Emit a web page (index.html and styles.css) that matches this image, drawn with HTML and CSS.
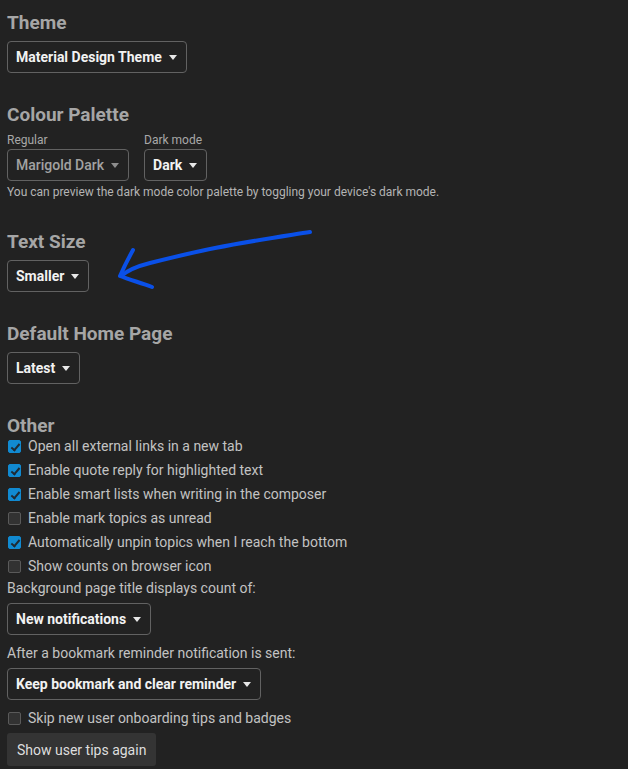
FILE: index.html
```html
<!DOCTYPE html>
<html>
<head>
<meta charset="utf-8">
<link rel="stylesheet" href="styles.css">
</head>
<body>
<div class="page">
  <section class="group">
    <h2 class="heading">Theme</h2>
    <div class="select"><span>Material Design Theme</span><i class="caret"></i></div>
  </section>

  <section class="group">
    <h2 class="heading palette-heading">Colour Palette</h2>
    <div class="palette">
      <div class="palette-col">
        <div class="sublabel">Regular</div>
        <div class="select disabled"><span>Marigold Dark</span><i class="caret"></i></div>
      </div>
      <div class="palette-col">
        <div class="sublabel">Dark mode</div>
        <div class="select"><span>Dark</span><i class="caret"></i></div>
      </div>
    </div>
    <div class="desc">You can preview the dark mode color palette by toggling your device's dark mode.</div>
  </section>

  <section class="group">
    <h2 class="heading">Text Size</h2>
    <div class="select"><span>Smaller</span><i class="caret"></i></div>
  </section>

  <section class="group">
    <h2 class="heading">Default Home Page</h2>
    <div class="select"><span>Latest</span><i class="caret"></i></div>
  </section>

  <section class="group other">
    <h2 class="heading tight">Other</h2>
    <label class="check"><span class="box on"></span>Open all external links in a new tab</label>
    <label class="check"><span class="box on"></span>Enable quote reply for highlighted text</label>
    <label class="check"><span class="box on"></span>Enable smart lists when writing in the composer</label>
    <label class="check"><span class="box"></span>Enable mark topics as unread</label>
    <label class="check"><span class="box on"></span>Automatically unpin topics when I reach the bottom</label>
    <label class="check"><span class="box"></span>Show counts on browser icon</label>
    <div class="field-label first">Background page title displays count of:</div>
    <div class="select"><span>New notifications</span><i class="caret"></i></div>
    <div class="field-label">After a bookmark reminder notification is sent:</div>
    <div class="select"><span>Keep bookmark and clear reminder</span><i class="caret"></i></div>
    <label class="check skip"><span class="box"></span>Skip new user onboarding tips and badges</label>
    <button class="btn">Show user tips again</button>
  </section>
</div>

<svg class="annotation" width="628" height="769" viewBox="0 0 628 769" xmlns="http://www.w3.org/2000/svg">
  <path d="M310 232 C 285 236, 250 241, 215 248 C 190 253, 170 258, 150 263 C 138 266, 128 270, 121 276" fill="none" stroke="#0a50e8" stroke-width="4" stroke-linecap="round" stroke-linejoin="round"/>
  <path d="M133 250 C 128 259, 124 267, 120 276 C 130 280, 142 283, 152 287" fill="none" stroke="#0a50e8" stroke-width="4" stroke-linecap="round" stroke-linejoin="round"/>
</svg>
</body>
</html>
```

FILE: styles.css
```css
html, body {
  margin: 0;
  padding: 0;
  background: #222222;
}

body {
  font-family: Roboto, "Liberation Sans", sans-serif;
  color: #c3c3c3;
  font-size: 14px;
  position: relative;
  min-height: 769px;
}

.page {
  padding: 13px 7px 0 7px;
}

.group {
  margin-bottom: 32px;
}

.heading {
  margin: 0 0 9px 0;
  font-size: 19px;
  line-height: 19px;
  font-weight: 700;
  color: #a6a6a6;
}

.heading.palette-heading {
  margin-bottom: 8px;
}

.heading.tight {
  margin-bottom: 2px;
}

.select {
  display: inline-flex;
  align-items: center;
  box-sizing: border-box;
  height: 32px;
  padding: 0 9px 0 8px;
  border: 1px solid #626262;
  border-radius: 4px;
  color: #f2f2f2;
  font-weight: 700;
  font-size: 14px;
  gap: 7px;
}

.select.disabled {
  color: #a2a2a2;
  font-weight: 500;
}

.caret {
  display: block;
  width: 0;
  height: 0;
  border-left: 4.5px solid transparent;
  border-right: 4.5px solid transparent;
  border-top: 5px solid #e8e8e8;
  margin-top: 1px;
}

.select.disabled .caret {
  border-top-color: #8e8e8e;
}

.palette {
  display: flex;
  gap: 15px;
}

.palette-col {
  display: flex;
  flex-direction: column;
}

.sublabel {
  font-size: 12px;
  line-height: 16px;
  color: #a8a8a8;
  margin-bottom: 1px;
}

.desc {
  margin-top: 3px;
  font-size: 12px;
  line-height: 16px;
  color: #b4b4b4;
}

.other {
  display: flex;
  flex-direction: column;
  align-items: flex-start;
}

.check {
  display: flex;
  align-items: center;
  line-height: 18px;
  margin-bottom: 6px;
  color: #c3c3c3;
}

.box {
  box-sizing: border-box;
  width: 13px;
  height: 13px;
  margin: 1px 7px 0 1px;
  border: 1px solid #5a5a5a;
  border-radius: 2px;
  background: #323232;
  position: relative;
}

.box.on {
  background: #118ad1;
  border-color: #118ad1;
}

.box.on::after {
  content: "";
  position: absolute;
  left: 3.5px;
  top: 0.5px;
  width: 3px;
  height: 7px;
  border-right: 2px solid #1f2a33;
  border-bottom: 2px solid #1f2a33;
  transform: rotate(40deg);
}

.field-label {
  line-height: 18px;
  margin: 0 0 6px 0;
  color: #c3c3c3;
}

.field-label.first {
  margin-top: -2px;
}

.other .select + .field-label {
  margin-top: 9px;
}

.other .select + .check {
  margin-top: 9px;
}

.check.skip {
  margin-bottom: 6px;
}

.btn {
  font-family: Roboto, "Liberation Sans", sans-serif;
  font-size: 14px;
  height: 33px;
  padding: 0 10px;
  border: none;
  border-radius: 3px;
  background: #343434;
  color: #dedede;
}

.annotation {
  position: absolute;
  left: 0;
  top: 0;
  pointer-events: none;
}
```
